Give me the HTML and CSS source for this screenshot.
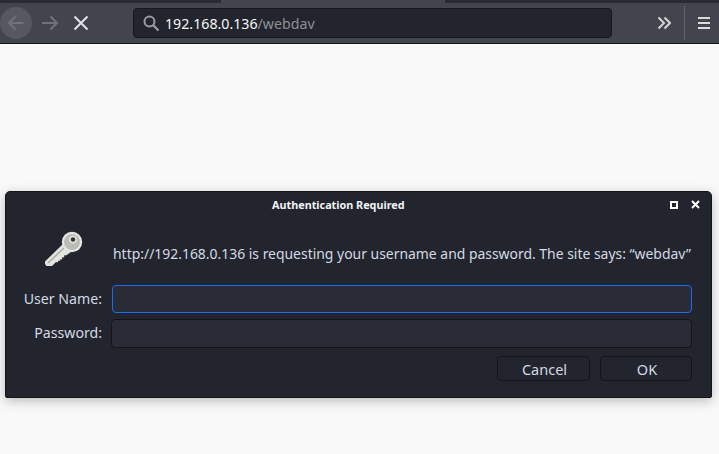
FILE: index.html
```html
<!DOCTYPE html>
<html lang="en">
<head>
  <meta charset="UTF-8" />
  <title>Authentication Required</title>
  <link rel="stylesheet" href="styles.css">
</head>
<body>
  <div class="tabstrip">
    <div class="tab-dark tab-left"></div>
    <div class="tab-light"></div>
    <div class="tab-dark tab-right"></div>
  </div>
  <div class="toolbar">
    <button type="button" class="nav-back" aria-label="Back">
      <svg width="20" height="20" viewBox="0 0 20 20"><path d="M17.500 10H3M9.500 3.500 3 10l6.500 6.500" fill="none" stroke="#70737a" stroke-width="2"/></svg>
    </button>
    <button type="button" class="nav-forward" aria-label="Forward">
      <svg width="20" height="20" viewBox="0 0 20 20"><path d="M2 10h15M10.500 3.500 17 10l-6.500 6.500" fill="none" stroke="#70737a" stroke-width="2"/></svg>
    </button>
    <button type="button" class="nav-stop" aria-label="Stop">
      <svg width="16" height="16" viewBox="0 0 16 16"><path d="M1.500 1.500l13 13M14.500 1.500l-13 13" fill="none" stroke="#e4e4e6" stroke-width="2"/></svg>
    </button>
    <div class="urlbar">
      <svg width="18" height="18" viewBox="0 0 18 18"><circle cx="7.500" cy="7.500" r="5" fill="none" stroke="#9a9ca2" stroke-width="2"/><path d="M11 11l5.500 5.500" stroke="#9a9ca2" stroke-width="2.200"/></svg>
      <span class="url-host">192.168.0.136</span><span class="url-path">/webdav</span>
    </div>
    <button type="button" class="overflow" aria-label="More tools">
      <svg width="14" height="14" viewBox="0 0 14 14"><path d="M1.500 1.500 7 7l-5.500 5.500M7.500 1.500 13 7l-5.500 5.500" fill="none" stroke="#d6d6d8" stroke-width="2"/></svg>
    </button>
    <div class="sep"></div>
    <button type="button" class="menu" aria-label="Menu">
      <span></span><span></span><span></span>
    </button>
  </div>

  <div class="content">
    <div class="dialog">
      <div class="titlebar">
        <div class="title">Authentication Required</div>
        <div class="win-max"></div>
        <svg class="win-close" width="9" height="9" viewBox="0 0 9 9"><path d="M1 1l7 7M8 1 1 8" fill="none" stroke="#fff" stroke-width="2"/></svg>
      </div>
      <div class="message">
        <svg class="key" width="40" height="38" viewBox="0 0 40 38">
          <!-- shaft with the teeth on the lower edge -->
          <path d="M2 30.500 20 13l8 8-5 3.500-1.500-.5-.5 2.500-1.500-.5-.5 2.500-1.500-.5-.5 2-1.500-.5-1 2-1.500-.5-4 4H3.500L2 33z" fill="#e4e4df"/>
          <path d="M5 32 21.500 16.500" stroke="#a8a8a3" stroke-width="1.300"/>
          <circle cx="29" cy="11" r="10.200" fill="#e6e6e2"/>
          <circle cx="29" cy="11" r="8" fill="#bcbcb7"/>
          <circle cx="30" cy="8.500" r="3.800" fill="#e6e6e2"/>
          <circle cx="30" cy="8.500" r="2.300" fill="#33353b"/>
        </svg>
        <p>http://192.168.0.136 is requesting your username and password. The site says: “webdav”</p>
      </div>
      <form class="fields" onsubmit="event.preventDefault();">
        <label for="username">User Name:</label>
        <input type="text" id="username" class="focused" />
        <label for="password">Password:</label>
        <input type="password" id="password" />
      </form>
      <div class="actions">
        <button type="button" class="btn btn-cancel">Cancel</button>
        <button type="button" class="btn btn-ok">OK</button>
      </div>
    </div>
  </div>
</body>
</html>
```

FILE: styles.css
```css
html, body {
  height: 100%;
}
body {
  margin: 0;
  overflow: hidden;
  background-color: #f9f9fa;
  font-family: 'Noto Sans', sans-serif;
  color: #d3dae3;
}
button {
  padding: 0;
  border: none;
  background: none;
}
svg {
  display: block;
}
.tabstrip {
  display: flex;
  height: 3px;
}
.tab-dark {
  background-color: #292b33;
}
.tab-left {
  width: 221px;
}
.tab-light {
  width: 224px;
  background-color: #42454d;
}
.tab-right {
  flex: 1;
}
.toolbar {
  display: flex;
  align-items: center;
  height: 40px;
  background-color: #42454d;
  border-bottom: 1px solid #15161a;
}
.nav-back {
  display: flex;
  align-items: center;
  justify-content: center;
  width: 32px;
  height: 32px;
  border-radius: 50%;
  background-color: #55585f;
}
.nav-forward {
  margin-left: 8px;
}
.nav-stop {
  margin-left: 13px;
}
.urlbar {
  display: flex;
  align-items: center;
  box-sizing: border-box;
  width: 479px;
  height: 30px;
  margin-left: 44px;
  padding-left: 8px;
  border: 1px solid #17181c;
  border-radius: 4px;
  background-color: #23252e;
  font-size: 14.200px;
}
.urlbar svg {
  margin-right: 5px;
}
.url-host {
  color: #f6f6f7;
}
.url-path {
  color: #8e9096;
}
.overflow {
  margin-left: 45px;
}
.sep {
  width: 1px;
  height: 34px;
  margin-left: 13px;
  background-color: #63666c;
}
.menu {
  display: flex;
  flex-direction: column;
  gap: 3px;
  margin-left: 13px;
}
.menu span {
  display: block;
  width: 12px;
  height: 2px;
  background-color: #dcdcdd;
}
.content {
  padding: 147px 7px 0 5px;
}
.dialog {
  box-sizing: border-box;
  height: 207px;
  border: 1px solid #14151a;
  border-radius: 5px 5px 2px 2px;
  background-color: #23252e;
  box-shadow: 0 3px 12px rgba(0, 0, 0, 0.25);
}
.titlebar {
  display: flex;
  align-items: center;
  height: 25px;
}
.title {
  margin-left: 266px;
  font-size: 10.800px;
  font-weight: 700;
  color: #f0f2f5;
}
.win-max {
  box-sizing: border-box;
  width: 8px;
  height: 8px;
  margin-left: 265px;
  border: 2px solid #fff;
}
.win-close {
  margin-left: 13px;
}
.message {
  display: flex;
  align-items: flex-start;
  height: 66px;
  padding-left: 37px;
}
.key {
  margin-top: 14px;
}
.message p {
  margin: 27px 0 0 30px;
  font-size: 13.930px;
  line-height: 19px;
  white-space: nowrap;
}
.fields {
  display: grid;
  grid-template-columns: 96px 581px;
  column-gap: 9px;
  row-gap: 6px;
  align-items: center;
  margin-top: 2px;
}
.fields label {
  padding-bottom: 2px;
  font-size: 14.150px;
  text-align: right;
}
.fields input {
  box-sizing: border-box;
  width: 100%;
  height: 29px;
  padding: 0 6px;
  border: 1px solid #14151a;
  border-radius: 4px;
  outline: none;
  background-color: #292b36;
}
.fields input.focused {
  height: 28px;
  margin-left: 1px;
  width: 580px;
  border-color: #1a6cf5;
}
.actions {
  display: flex;
  justify-content: flex-end;
  gap: 10px;
  margin-top: 8px;
  padding-right: 19px;
}
.btn {
  box-sizing: border-box;
  height: 25px;
  padding-left: 2px;
  border: 1px solid #14151a;
  border-radius: 4px;
  background-color: #23252e;
  color: #d3dae3;
  font-family: inherit;
  font-size: 14.500px;
}
.btn-cancel {
  width: 93px;
}
.btn-ok {
  width: 92px;
}
```
